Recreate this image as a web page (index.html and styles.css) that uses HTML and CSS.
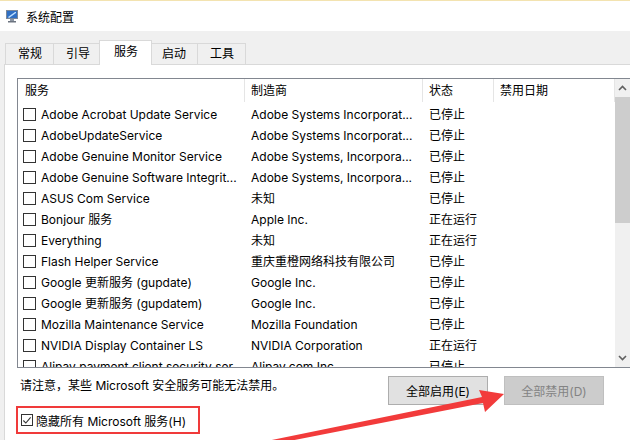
FILE: index.html
```html
<!DOCTYPE html>
<html lang="zh-CN">
<head>
    <meta charset="UTF-8">
    <title>系统配置</title>
    <link rel="stylesheet" href="styles.css">
</head>
<body>
<div class="window">
    <div class="titlebar">
        <svg class="app-icon" width="14" height="14" viewBox="0 0 14 14">
            <rect x="1.5" y="1.5" width="11" height="8" fill="#2f6fc4" stroke="#7a8799"/>
            <path d="M3 8 L10 3 L11 3 L11 4 L4 9 Z" fill="#bfe0ff"/>
            <rect x="5" y="10" width="4" height="2" fill="#8d96a3"/>
            <rect x="3" y="12" width="8" height="1.5" fill="#6c7480"/>
        </svg>
        <span>系统配置</span>
    </div>

    <!-- tab strip -->
    <div class="tabs">
        <div class="tab">常规</div>
        <div class="tab">引导</div>
        <div class="tab active">服务</div>
        <div class="tab">启动</div>
        <div class="tab">工具</div>
    </div>

    <div class="panel">
        <div class="list">
            <div class="list-body">
                <div class="row head">
                    <div class="cell c1">服务</div>
                    <div class="cell c2">制造商</div>
                    <div class="cell c3">状态</div>
                    <div class="cell c4">禁用日期</div>
                </div>
                <div class="row">
                    <div class="cell c1"><span class="box"></span>Adobe Acrobat Update Service</div>
                    <div class="cell c2">Adobe Systems Incorporat...</div>
                    <div class="cell c3">已停止</div>
                    <div class="cell c4"></div>
                </div>
                <div class="row">
                    <div class="cell c1"><span class="box"></span>AdobeUpdateService</div>
                    <div class="cell c2">Adobe Systems Incorporat...</div>
                    <div class="cell c3">已停止</div>
                    <div class="cell c4"></div>
                </div>
                <div class="row">
                    <div class="cell c1"><span class="box"></span>Adobe Genuine Monitor Service</div>
                    <div class="cell c2">Adobe Systems, Incorpora...</div>
                    <div class="cell c3">已停止</div>
                    <div class="cell c4"></div>
                </div>
                <div class="row">
                    <div class="cell c1"><span class="box"></span>Adobe Genuine Software Integrit...</div>
                    <div class="cell c2">Adobe Systems, Incorpora...</div>
                    <div class="cell c3">已停止</div>
                    <div class="cell c4"></div>
                </div>
                <div class="row">
                    <div class="cell c1"><span class="box"></span>ASUS Com Service</div>
                    <div class="cell c2">未知</div>
                    <div class="cell c3">已停止</div>
                    <div class="cell c4"></div>
                </div>
                <div class="row">
                    <div class="cell c1"><span class="box"></span>Bonjour 服务</div>
                    <div class="cell c2">Apple Inc.</div>
                    <div class="cell c3">正在运行</div>
                    <div class="cell c4"></div>
                </div>
                <div class="row">
                    <div class="cell c1"><span class="box"></span>Everything</div>
                    <div class="cell c2">未知</div>
                    <div class="cell c3">正在运行</div>
                    <div class="cell c4"></div>
                </div>
                <div class="row">
                    <div class="cell c1"><span class="box"></span>Flash Helper Service</div>
                    <div class="cell c2">重庆重橙网络科技有限公司</div>
                    <div class="cell c3">已停止</div>
                    <div class="cell c4"></div>
                </div>
                <div class="row">
                    <div class="cell c1"><span class="box"></span>Google 更新服务 (gupdate)</div>
                    <div class="cell c2">Google Inc.</div>
                    <div class="cell c3">已停止</div>
                    <div class="cell c4"></div>
                </div>
                <div class="row">
                    <div class="cell c1"><span class="box"></span>Google 更新服务 (gupdatem)</div>
                    <div class="cell c2">Google Inc.</div>
                    <div class="cell c3">已停止</div>
                    <div class="cell c4"></div>
                </div>
                <div class="row">
                    <div class="cell c1"><span class="box"></span>Mozilla Maintenance Service</div>
                    <div class="cell c2">Mozilla Foundation</div>
                    <div class="cell c3">已停止</div>
                    <div class="cell c4"></div>
                </div>
                <div class="row">
                    <div class="cell c1"><span class="box"></span>NVIDIA Display Container LS</div>
                    <div class="cell c2">NVIDIA Corporation</div>
                    <div class="cell c3">正在运行</div>
                    <div class="cell c4"></div>
                </div>
                <div class="row">
                    <div class="cell c1"><span class="box"></span>Alipay payment client security ser...</div>
                    <div class="cell c2">Alipay.com Inc.</div>
                    <div class="cell c3">已停止</div>
                    <div class="cell c4"></div>
                </div>
            </div>

            <!-- vertical scrollbar -->
            <div class="scrollbar">
                <div class="sb-btn">
                    <svg width="9" height="6" viewBox="0 0 9 6"><path d="M1 5 L4.5 1.5 L8 5" fill="none" stroke="#606060" stroke-width="1.6"/></svg>
                </div>
                <div class="sb-thumb"></div>
                <div class="sb-track"></div>
                <div class="sb-btn">
                    <svg width="9" height="6" viewBox="0 0 9 6"><path d="M1 1 L4.5 4.5 L8 1" fill="none" stroke="#606060" stroke-width="1.6"/></svg>
                </div>
            </div>
        </div>

        <div class="footer">
            <p class="note">请注意，某些 Microsoft 安全服务可能无法禁用。</p>
            <div class="buttons">
                <button class="btn">全部启用(E)</button>
                <button class="btn" disabled>全部禁用(D)</button>
            </div>
        </div>

        <div class="hide-ms">
            <span class="box checked">
                <svg width="11" height="11" viewBox="0 0 11 11"><path d="M1.5 5.5 L4.2 8.3 L9.5 2" fill="none" stroke="#333" stroke-width="1.2"/></svg>
            </span>
            隐藏所有 Microsoft 服务(H)
        </div>
    </div>

    <!-- red annotation arrow -->
    <svg class="pointer" width="630" height="440" viewBox="0 0 630 440">
        <polygon points="262,442 482,397 479,390 504,394 485,412 483,403 264,446" fill="#f23b3b"/>
    </svg>
</div>
</body>
</html>
```

FILE: styles.css
```css
* {
    box-sizing: border-box;
}
body {
    margin: 0;
    overflow: hidden;
    font-family: Inter, "Noto Sans CJK SC", sans-serif;
    font-size: 12px;
    color: #000;
    background-color: #fff;
}
.window {
    position: relative;
    width: 630px;
    height: 440px;
    overflow: hidden;
    background-color: #f0f0f0;
}

/* title bar */
.titlebar {
    height: 31px;
    background-color: #fff;
    border-top: 1px solid #f3e3b0;
    display: flex;
    align-items: center;
    padding-left: 5px;
}
.app-icon {
    margin-right: 7px;
}

/* tabs */
.tabs {
    height: 33px;
    display: flex;
    align-items: flex-end;
    padding-left: 5px;
}
.tab {
    height: 21px;
    line-height: 19px;
    padding: 0 11px 0 12px;
    border: 1px solid #d9d9d9;
    border-bottom: none;
    margin-left: -1px;
    background-color: #f0f0f0;
}
.tab:first-child {
    margin-left: 0;
}
.tab.active {
    height: 25px;
    line-height: 22px;
    padding: 0 13px 0 14px;
    margin: 0 -2px -1px -3px;
    background-color: #fff;
    position: relative;
    z-index: 1;
}

/* tab page */
.panel {
    height: 376px;
    margin-left: 4px;
    background-color: #fff;
    border-top: 1px solid #d9d9d9;
    border-left: 1px solid #d9d9d9;
    padding-top: 13px;
}
.list {
    display: flex;
    width: 616px;
    height: 290px;
    margin-left: 12px;
    border: 1px solid #828790;
    overflow: hidden;
}
.list-body {
    width: 597px;
    overflow: hidden;
}
.row {
    display: flex;
    height: 21px;
    line-height: 21px;
    white-space: nowrap;
}
.row.head {
    height: 25px;
    line-height: 24px;
}
.cell {
    overflow: hidden;
    padding-left: 6px;
    display: flex;
    align-items: center;
}
.head .cell {
    border-right: 1px solid #e5e5e5;
    margin-bottom: 2px;
}
.head .c1 {
    padding-left: 7px;
}
.c1 {
    width: 227px;
    padding-left: 5px;
}
.c2 {
    width: 178px;
}
.c3 {
    width: 71px;
}
.c4 {
    width: 121px;
}
.box {
    display: inline-flex;
    align-items: center;
    justify-content: center;
    width: 13px;
    height: 13px;
    border: 1px solid #333;
    background-color: #fff;
    margin-right: 5px;
    flex-shrink: 0;
}

/* scrollbar */
.scrollbar {
    width: 17px;
    display: flex;
    flex-direction: column;
    background-color: #f0f0f0;
}
.sb-btn {
    height: 18px;
    display: flex;
    align-items: center;
    justify-content: center;
    padding-right: 2px;
}
.sb-thumb {
    height: 126px;
    background-color: #cdcdcd;
}
.sb-track {
    flex: 1;
}

/* bottom area */
.footer {
    display: flex;
    align-items: flex-start;
    margin-top: 8px;
    padding-left: 15px;
    padding-right: 26px;
}
.note {
    flex: 1;
    margin: 0;
    line-height: 20px;
}
.buttons {
    display: flex;
    gap: 16px;
}
.btn {
    width: 100px;
    height: 29px;
    font-family: inherit;
    font-size: 12px;
    color: #000;
    background-color: #e1e1e1;
    border: 1px solid #adadad;
    padding: 0;
}
.btn:disabled {
    background-color: #cccccc;
    border-color: #bfbfbf;
    color: #838383;
}
.hide-ms {
    display: inline-flex;
    align-items: center;
    height: 28px;
    margin: 1px 0 0 11px;
    padding: 0 12px 0 3px;
    border: 2px solid #f03a3a;
}
.hide-ms .box {
    width: 12px;
    height: 12px;
    margin-right: 3px;
}

.pointer {
    position: absolute;
    left: 0;
    top: 0;
    pointer-events: none;
}
```
